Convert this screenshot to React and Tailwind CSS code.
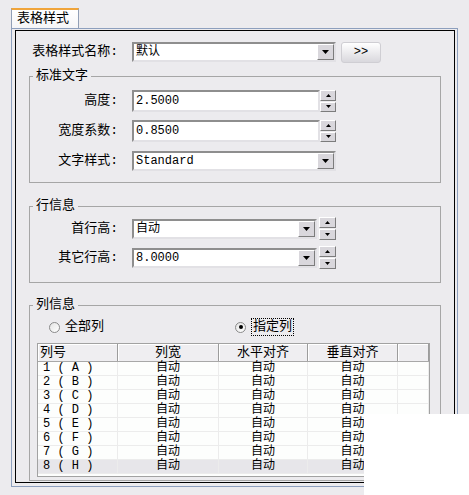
import React from 'react';

const FONT = "[font-family:'Liberation_Mono','Noto_Sans_CJK_SC',monospace]";

const sunken =
  'border-2 border-t-[#8e8e8e] border-l-[#8e8e8e] border-b-[#e2e1e5] border-r-[#e2e1e5] bg-white';
const raised =
  'border border-t-white border-l-white border-b-[#7c7c7c] border-r-[#7c7c7c] bg-[#d9d7dc]';

function DownTri({ w = 7, h = 4 }) {
  return (
    <svg width={w} height={h} viewBox={`0 0 ${w} ${h}`}>
      <path d={`M0 0H${w}L${w / 2} ${h}Z`} fill="#000" />
    </svg>
  );
}

function UpTri({ w = 5, h = 3 }) {
  return (
    <svg width={w} height={h} viewBox={`0 0 ${w} ${h}`}>
      <path d={`M0 ${h}H${w}L${w / 2} 0Z`} fill="#000" />
    </svg>
  );
}

function Combo({ value, width }) {
  return (
    <div className={`flex h-[20px] ${width} ${sunken}`}>
      <div className="flex-1 pl-[2px] text-[12px] leading-[16px]">{value}</div>
      <div className={`flex h-full w-[17px] items-center justify-center ${raised}`}>
        <DownTri />
      </div>
    </div>
  );
}

function Spinner({ className }) {
  return (
    <div className={`flex flex-col gap-[1px] ${className}`}>
      <div className={`flex flex-1 items-center justify-center ${raised}`}>
        <UpTri />
      </div>
      <div className={`flex flex-1 items-center justify-center ${raised}`}>
        <DownTri w={5} h={3} />
      </div>
    </div>
  );
}

function SpinInput({ value }) {
  return (
    <div className="flex h-[22px] w-[204px]">
      <div className={`h-full w-[188px] pl-[2px] text-[12px] leading-[18px] ${sunken}`}>{value}</div>
      <Spinner className="h-full w-[16px]" />
    </div>
  );
}

function ComboSpin({ value }) {
  return (
    <div className="flex h-[23px] w-[204px] items-center">
      <Combo value={value} width="w-[186px]" />
      <Spinner className="ml-[2px] h-[23px] w-[17px]" />
    </div>
  );
}

function Row({ label, h, children }) {
  return (
    <div className={`flex items-center ${h}`}>
      <div className="w-[88px] text-right text-[13px] leading-[16px]">{label}</div>
      <div className="ml-[14px]">{children}</div>
    </div>
  );
}

function Radio({ checked }) {
  return (
    <div className="flex h-[11px] w-[11px] items-center justify-center rounded-full border border-[#8a8a8a] bg-linear-to-br from-[#e4e4e4] to-white">
      {checked && <div className="h-[4px] w-[4px] rounded-full bg-black" />}
    </div>
  );
}

const rows = ['1 ( A )', '2 ( B )', '3 ( C )', '4 ( D )', '5 ( E )', '6 ( F )', '7 ( G )', '8 ( H )'];

function Table() {
  const head = 'h-full border-r border-r-[#9c9c9c] shadow-[inset_1px_1px_0_#fff] text-[13px] leading-[17px]';
  const cell = 'h-full border-r border-r-[#ececec] text-center';
  return (
    <div className="ml-[7px] mt-[8px] h-[134px] w-[393px] border border-[#a2a2a2] bg-[#fdfefd]">
      <div className="flex h-[18px] border-b border-b-[#a8a8a8] bg-[#efeef1]">
        <div className={`w-[80px] pl-[2px] ${head}`}>列号</div>
        <div className={`w-[101px] text-center ${head}`}>列宽</div>
        <div className={`w-[89px] text-center ${head}`}>水平对齐</div>
        <div className={`w-[90px] text-center ${head}`}>垂直对齐</div>
        <div className={`w-[31px] ${head}`} />
      </div>
      {rows.map((r, i) => (
        <div
          key={r}
          className={`flex h-[14px] border-b border-b-[#ececec] text-[12px] leading-[13px] ${i === 7 ? 'bg-[#e7e6ea]' : ''}`}
        >
          <div className="h-full w-[80px] whitespace-pre border-r border-r-[#ececec] pl-[5px]">{r}</div>
          <div className={`w-[101px] ${cell}`}>自动</div>
          <div className={`w-[89px] ${cell}`}>自动</div>
          <div className={`w-[90px] ${cell}`}>自动</div>
          <div className={`w-[31px] ${cell}`} />
        </div>
      ))}
    </div>
  );
}

export default function App() {
  return (
    <div className={`relative h-[495px] w-[469px] overflow-hidden bg-[#ecebee] pl-[11px] pt-[8px] text-black ${FONT}`}>
      <div className="h-[20px] w-[68px] border-x border-t-2 border-x-[#919fb6] border-t-[#f0a43a] bg-linear-to-b from-white to-[#f5f5f7] pl-[5px] text-[13px] leading-[17px]">
        表格样式
      </div>
      <div className="h-[459px] w-[447px] border border-[#8d9fbd] pb-[3px] pl-[3px] pr-[2px] pt-[1px]">
        <div className="h-full w-full border border-black px-[13px] pt-[11px]">
          <div className="flex h-[20px] items-center">
            <div className="w-[89px] text-right text-[13px] leading-[16px]">表格样式名称:</div>
            <div className="ml-[14px]">
              <Combo value="默认" width="w-[204px]" />
            </div>
            <div className="ml-[5px] flex h-[21px] w-[40px] items-center justify-center rounded-[3px] border border-[#cfced3] bg-linear-to-b from-white to-[#d9d8dd] text-[12px]">
              &gt;&gt;
            </div>
          </div>

          <fieldset className="mt-[6px] w-[412px] border border-[#a6a6a6] pb-[10px]">
            <legend className="ml-[3px] px-[3px] text-[13px] leading-[16px]">标准文字</legend>
            <div className="flex flex-col gap-[8px] pt-[6px]">
              <Row label="高度:" h="h-[22px]">
                <SpinInput value="2.5000" />
              </Row>
              <Row label="宽度系数:" h="h-[22px]">
                <SpinInput value="0.8500" />
              </Row>
              <Row label="文字样式:" h="h-[22px]">
                <Combo value="Standard" width="w-[204px]" />
              </Row>
            </div>
          </fieldset>

          <fieldset className="mt-[15px] w-[412px] border border-[#a6a6a6] pb-[13px]">
            <legend className="ml-[3px] px-[3px] text-[13px] leading-[16px]">行信息</legend>
            <div className="flex flex-col gap-[6px] pt-[3px]">
              <Row label="首行高:" h="h-[23px]">
                <ComboSpin value="自动" />
              </Row>
              <Row label="其它行高:" h="h-[23px]">
                <ComboSpin value="8.0000" />
              </Row>
            </div>
          </fieldset>

          <fieldset className="mt-[14px] w-[412px] border border-[#a6a6a6] pb-[3px]">
            <legend className="ml-[3px] px-[3px] text-[13px] leading-[16px]">列信息</legend>
            <div className="flex h-[16px] items-center pt-0 mt-[6px] text-[13px] leading-[16px]">
              <div className="ml-[19px] flex items-center">
                <Radio />
                <span className="ml-[5px]">全部列</span>
              </div>
              <div className="ml-[131px] flex items-center">
                <Radio checked />
                <span className="ml-[5px] border border-dotted border-black px-[1px]">指定列</span>
              </div>
            </div>
            <Table />
          </fieldset>
        </div>
      </div>
      <div className="absolute left-[364px] top-[414px] h-[81px] w-[105px] bg-white" />
    </div>
  );
}
